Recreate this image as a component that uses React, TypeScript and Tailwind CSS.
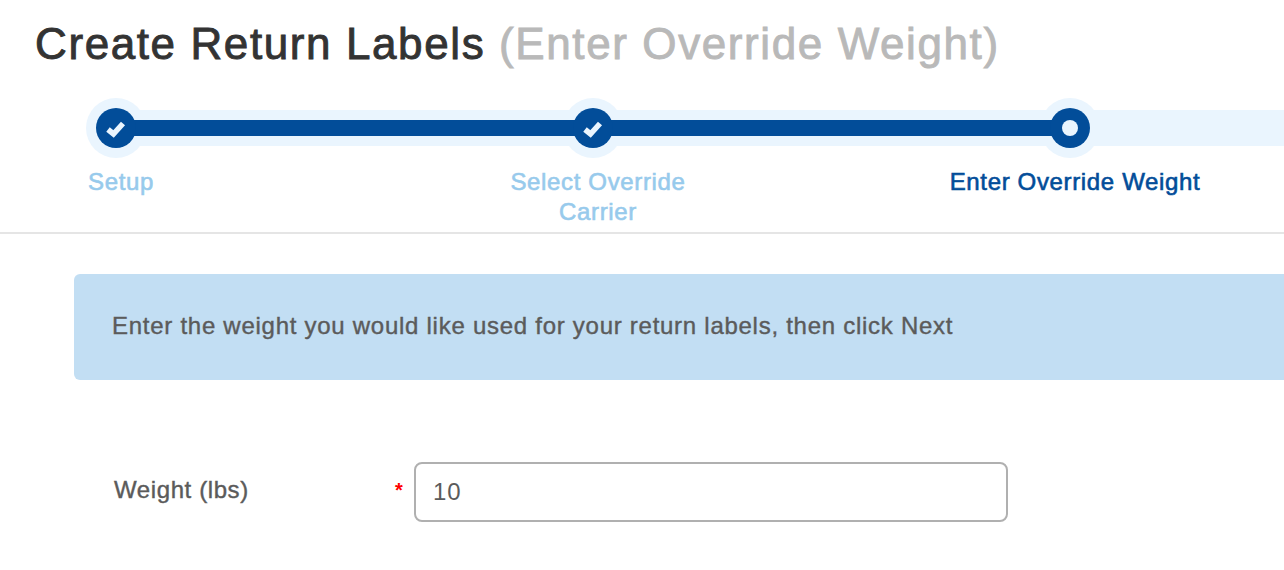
const BLUE = 'bg-[#024d99]';

const CheckIcon = () => (
  <svg width="40" height="40" viewBox="0 0 40 40" fill="none">
    <path d="M12 21.5 L17.5 26 L27 15.5" stroke="#eaf5fe" strokeWidth="5.5" />
  </svg>
);

const StepCircle = ({ current }: { current?: boolean }) => (
  <div className="relative flex size-[60px] shrink-0 items-center justify-center rounded-full bg-[#eaf5fe]">
    <div className={`relative z-20 flex size-10 items-center justify-center rounded-full ${BLUE}`}>
      {current ? <div className="size-4 rounded-full bg-[#eaf5fe]" /> : <CheckIcon />}
    </div>
  </div>
);

const steps = [
  { label: 'Setup', color: 'text-[#97caec]' },
  { label: 'Select Override Carrier', color: 'text-[#97caec]' },
  { label: 'Enter Override Weight', color: 'text-[#024d99]' },
];

export default function App() {
  return (
    <div className="h-[570px] w-[1284px] overflow-hidden bg-white font-['Liberation_Sans',Arial,sans-serif]">
      <h1 className="ml-[35px] whitespace-nowrap pt-[17px] text-[44px] leading-[54px] tracking-[1.6px] text-[#333333] [-webkit-text-stroke:0.9px]">
        Create Return Labels{' '}
        <span className="text-[#b9b9b9]">(Enter Override Weight)</span>
      </h1>

      <div className="relative mt-[27px] flex h-[60px] items-center gap-[417px] pl-[86px]">
        <div className="absolute left-[116px] right-0 top-[12px] h-9 bg-[#eaf5fe]" />
        <StepCircle />
        <StepCircle />
        <StepCircle current />
        <div className={`absolute left-[116px] top-[22px] z-10 h-4 w-[954px] ${BLUE}`} />
      </div>

      <div className="ml-[-7px] mt-[9px] flex h-[67px] gap-[221px] border-b-2 border-[#e5e5e5]">
        {steps.map((step) => (
          <div
            key={step.label}
            className={`w-[256px] shrink-0 text-center text-[24px] leading-[30px] tracking-[0.65px] [-webkit-text-stroke:0.6px] ${step.color}`}
          >
            {step.label}
          </div>
        ))}
      </div>

      <div className="ml-[74px] mt-[40px] flex h-[106px] items-center rounded-l-md bg-[#c2def3] pb-[2px] pl-[38px] text-[24px] tracking-[0.73px] text-[#5b5b5b] [-webkit-text-stroke:0.4px]">
        Enter the weight you would like used for your return labels, then click Next
      </div>

      <div className="ml-[114px] mt-[82px] flex items-center">
        <label className="w-[280px] pb-[4px] text-[24px] tracking-[0.6px] text-[#5b5b5b] [-webkit-text-stroke:0.4px]">
          Weight (lbs)
        </label>
        <span className="w-5 pb-[4px] pl-[1px] text-[20px] font-bold text-[#ff0000]">*</span>
        <input
          readOnly
          value="10"
          className="h-[60px] w-[594px] rounded-lg border-2 border-[#b0b0b0] bg-white px-[17px] text-[24px] tracking-[1px] text-[#5b5b5b] outline-none"
        />
      </div>
    </div>
  );
}
